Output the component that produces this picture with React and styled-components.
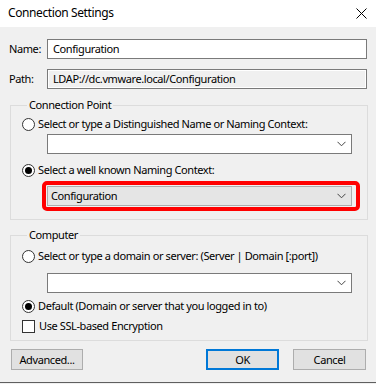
import React from "react";
import styled, { createGlobalStyle } from "styled-components";

const Global = createGlobalStyle`
  html, body { margin: 0; padding: 0; background: #f0f0f0; }
  body { font-family: "Noto Sans", "Open Sans", sans-serif; font-size: 11px; letter-spacing: -0.4px; color: #000; }
  * { box-sizing: border-box; }
`;

const Window = styled.div`
  width: 376px;
  height: 384px;
  background: #f0f0f0;
  display: flex;
  flex-direction: column;
  overflow: hidden;
`;

const TitleBar = styled.div`
  height: 27px;
  background: #fff;
  display: flex;
  align-items: center;
  justify-content: space-between;
  padding: 0 8px 1px 8px;
  flex: none;
`;

const Title = styled.div`
  font-size: 12px;
  line-height: 16px;
`;

const CloseIcon = styled.svg`
  width: 11px;
  height: 11px;
  margin-right: 1px;
`;

const Body = styled.div`
  flex: 1;
  display: flex;
  flex-direction: column;
  padding: 12px 9px 0 10px;
  border-bottom: 1px solid #5f5f5f;
  margin-bottom: 1px;
`;

const FieldRow = styled.div`
  display: flex;
  align-items: center;
  margin-top: ${(p) => p.$mt || 0}px;
  margin-left: -1px;
`;

const FieldLabel = styled.div`
  width: 38px;
  line-height: 16px;
`;

const TextBox = styled.div`
  width: 320px;
  height: 20px;
  border: 1px solid #7a7a7a;
  background: ${(p) => (p.$readonly ? "#f0f0f0" : "#fff")};
  box-shadow: ${(p) => (p.$readonly ? "inset 0 0 0 1px #fff" : "none")};
  padding: 0 5px;
  display: flex;
  align-items: center;
  line-height: 16px;
`;

const Group = styled.fieldset`
  margin: ${(p) => p.$mt || 0}px 0 0 0;
  padding: 0 8px ${(p) => p.$pb || 0}px 11px;
  border: 1px solid #dcdcdc;
  width: 358px;
  display: flex;
  flex-direction: column;
  min-width: 0;
`;

const Legend = styled.legend`
  padding: 0 2px;
  margin-left: 5px;
  line-height: 16px;
`;

const OptionRow = styled.label`
  display: flex;
  align-items: center;
  height: 16px;
  margin-top: ${(p) => p.$mt || 0}px;
  line-height: 16px;
  white-space: nowrap;
`;

const Radio = styled.span`
  width: 13px;
  height: 13px;
  border-radius: 50%;
  border: 1px solid #333;
  background: #fff;
  display: flex;
  align-items: center;
  justify-content: center;
  margin-right: 3px;
  flex: none;
  &::after {
    content: "";
    width: 7px;
    height: 7px;
    border-radius: 50%;
    background: ${(p) => (p.$checked ? "#000" : "transparent")};
  }
`;

const Check = styled.span`
  width: 13px;
  height: 13px;
  border: 1px solid #333;
  background: #fff;
  margin-right: 4px;
  flex: none;
`;

const Combo = styled.div`
  width: 305px;
  height: 20px;
  border: 1px solid ${(p) => (p.$active ? "#adadad" : "#7a7a7a")};
  background: ${(p) => (p.$active ? "#e5e5e5" : "#fff")};
  display: flex;
  align-items: center;
  justify-content: space-between;
  padding: 0 5px 0 3px;
  margin-top: ${(p) => p.$mt || 0}px;
  margin-left: ${(p) => p.$ml || 0}px;
  line-height: 16px;
`;

const Highlight = styled.div`
  width: 318px;
  border: 4px solid #f00;
  border-radius: 5px;
  padding: 1px;
  margin-top: 3px;
  margin-left: 20px;
`;

const Chevron = () => (
  <svg width="9" height="6" viewBox="0 0 9 6">
    <polyline points="0.5,0.8 4.5,4.8 8.5,0.8" fill="none" stroke="#444" strokeWidth="1" />
  </svg>
);

const ButtonRow = styled.div`
  display: flex;
  align-items: center;
  margin-top: 8px;
  margin-left: 1px;
`;

const Button = styled.div`
  width: ${(p) => p.$w || 73}px;
  height: 21px;
  border: ${(p) => (p.$default ? "2px solid #0078d7" : "1px solid #adadad")};
  background: #e1e1e1;
  display: flex;
  align-items: center;
  justify-content: center;
  line-height: 16px;
  margin-left: ${(p) => p.$ml || 0}px;
`;

export default function App() {
  return (
    <Window>
      <Global />
      <TitleBar>
        <Title>Connection Settings</Title>
        <CloseIcon viewBox="0 0 11 11">
          <path d="M0.5 0.5 L10.5 10.5 M10.5 0.5 L0.5 10.5" stroke="#000" strokeWidth="1" />
        </CloseIcon>
      </TitleBar>
      <Body>
        <FieldRow>
          <FieldLabel>Name:</FieldLabel>
          <TextBox>Configuration</TextBox>
        </FieldRow>
        <FieldRow $mt={10}>
          <FieldLabel>Path:</FieldLabel>
          <TextBox $readonly>LDAP://dc.vmware.local/Configuration</TextBox>
        </FieldRow>

        <Group $mt={8} $pb={8}>
          <Legend>Connection Point</Legend>
          <OptionRow $mt={3}>
            <Radio />
            Select or type a Distinguished Name or Naming Context:
          </OptionRow>
          <Combo $mt={2} $ml={25}>
            <span />
            <Chevron />
          </Combo>
          <OptionRow $mt={8}>
            <Radio $checked />
            Select a well known Naming Context:
          </OptionRow>
          <Highlight>
            <Combo $active>
              <span>Configuration</span>
              <Chevron />
            </Combo>
          </Highlight>
        </Group>

        <Group $mt={7} $pb={6}>
          <Legend>Computer</Legend>
          <OptionRow $mt={5}>
            <Radio />
            Select or type a domain or server: (Server | Domain [:port])
          </OptionRow>
          <Combo $mt={9} $ml={25}>
            <span />
            <Chevron />
          </Combo>
          <OptionRow $mt={5}>
            <Radio $checked />
            Default (Domain or server that you logged in to)
          </OptionRow>
          <OptionRow $mt={4}>
            <Check />
            Use SSL-based Encryption
          </OptionRow>
        </Group>

        <ButtonRow>
          <Button $w={72}>Advanced...</Button>
          <Button $ml={123} $default>OK</Button>
          <Button $ml={14}>Cancel</Button>
        </ButtonRow>
      </Body>
    </Window>
  );
}
